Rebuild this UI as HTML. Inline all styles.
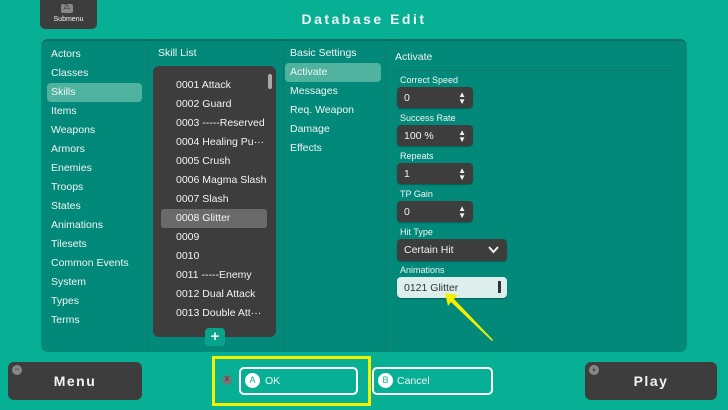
<!DOCTYPE html><html><head><style>
*{margin:0;padding:0;box-sizing:border-box}
body{width:728px;height:410px;background:#07b095;font-family:"Liberation Sans",sans-serif;position:relative;overflow:hidden;color:#f0f5f3}
.a{position:absolute}
.t{font-size:10.5px;white-space:nowrap}
.dark{background:#3d3d3d}
.sp{position:absolute;background:#3d3d3d;border-radius:4px;width:76px;height:21px;box-shadow:0 1px 1px rgba(0,0,0,.3)}
.sp span{position:absolute;left:7px;top:5px;font-size:10.5px}
.sp i{position:absolute;right:7px;top:4px;font-style:normal;font-size:8px;line-height:7px}
.lb{position:absolute;font-size:9px;left:400px}
</style></head><body>
<div class="a dark" style="left:40px;top:-6px;width:57px;height:35px;border-radius:5px"></div>
<div class="a" style="left:61px;top:4px;width:12px;height:9px;background:#888;border-radius:2px;font-size:6px;color:#333;text-align:center;line-height:9px">ZL</div>
<div class="a" style="left:40px;top:16px;width:57px;text-align:center;font-size:7px">Submenu</div>
<div class="a" style="left:0;width:728px;top:11px;text-align:center;font-weight:bold;font-size:14px;letter-spacing:2.5px">Database Edit</div>
<div class="a" style="left:41px;top:39px;width:646px;height:313px;background:#03897a;border-radius:7px;border-top:2px solid #05705f"></div>
<div class="a" style="left:147px;top:45px;width:1px;height:305px;background:#0b7a6b"></div>
<div class="a" style="left:283px;top:45px;width:1px;height:305px;background:#0b7a6b"></div>
<div class="a" style="left:385px;top:45px;width:1px;height:305px;background:#0b7a6b"></div>
<div class="a" style="left:47px;top:83px;width:95px;height:19px;background:#4fb3a0;border-radius:4px"></div>
<div class="a t" style="left:51px;top:45px;line-height:19px">Actors<br>Classes<br>Skills<br>Items<br>Weapons<br>Armors<br>Enemies<br>Troops<br>States<br>Animations<br>Tilesets<br>Common Events<br>System<br>Types<br>Terms</div>
<div class="a t" style="left:158px;top:47px">Skill List</div>
<div class="a dark" style="left:153px;top:66px;width:123px;height:271px;border-radius:6px"></div>
<div class="a" style="left:268px;top:74px;width:4px;height:15px;background:#aaa;border-radius:2px"></div>
<div class="a" style="left:161px;top:209px;width:106px;height:19px;background:#6a6a6a;border-radius:3px"></div>
<div class="a t" style="left:176px;top:76px;line-height:19px">0001 Attack<br>0002 Guard<br>0003 -----Reserved<br>0004 Healing Pu···<br>0005 Crush<br>0006 Magma Slash<br>0007 Slash<br>0008 Glitter<br>0009<br>0010<br>0011 -----Enemy<br>0012 Dual Attack<br>0013 Double Att···</div>
<div class="a" style="left:205px;top:328px;width:20px;height:18px;background:#07a48b;border-radius:4px;text-align:center;font-weight:bold;font-size:15px;line-height:17px">+</div>
<div class="a" style="left:285px;top:63px;width:96px;height:19px;background:#4fb3a0;border-radius:4px"></div>
<div class="a t" style="left:290px;top:44px;line-height:19px">Basic Settings<br>Activate<br>Messages<br>Req. Weapon<br>Damage<br>Effects</div>
<div class="a t" style="left:395px;top:51px">Activate</div>
<div class="a" style="left:395px;top:70px;width:277px;height:1px;background:#1a7365"></div>
<div class="lb" style="top:75px">Correct Speed</div>
<div class="sp" style="left:397px;top:87px"><span>0</span><i>▲<br>▼</i></div>
<div class="lb" style="top:113px">Success Rate</div>
<div class="sp" style="left:397px;top:125px"><span>100 %</span><i>▲<br>▼</i></div>
<div class="lb" style="top:151px">Repeats</div>
<div class="sp" style="left:397px;top:163px"><span>1</span><i>▲<br>▼</i></div>
<div class="lb" style="top:189px">TP Gain</div>
<div class="sp" style="left:397px;top:201px"><span>0</span><i>▲<br>▼</i></div>
<div class="lb" style="top:227px">Hit Type</div>
<div class="sp" style="left:397px;top:239px;width:110px;height:22px"><span>Certain Hit</span>
<svg style="position:absolute;right:8px;top:7px" width="11" height="8"><path d="M1 1 L5.5 6 L10 1" stroke="#f0f0f0" stroke-width="2" fill="none"/></svg></div>
<div class="lb" style="top:265px">Animations</div>
<div class="sp" style="left:397px;top:277px;width:110px;height:21px;background:#dcefec;color:#333"><span>0121 Glitter</span></div>
<div class="a" style="left:498px;top:281px;width:3px;height:12px;background:#333"></div>
<svg class="a" style="left:430px;top:285px" width="70" height="60"><path d="M15 8 L28 10 L24 14 L63 55 L62 56 L21 17 L18 21 Z" fill="#f5f000"/></svg>
<div class="a dark" style="left:8px;top:362px;width:134px;height:38px;border-radius:6px"></div>
<div class="a" style="left:12px;top:365px;width:10px;height:10px;border-radius:50%;background:#888;color:#333;font-size:9px;text-align:center;line-height:9px">−</div>
<div class="a" style="left:8px;top:373px;width:134px;text-align:center;font-weight:bold;font-size:14px;letter-spacing:1.5px">Menu</div>
<div class="a dark" style="left:585px;top:362px;width:132px;height:38px;border-radius:6px"></div>
<div class="a" style="left:589px;top:365px;width:10px;height:10px;border-radius:50%;background:#888;color:#333;font-size:9px;text-align:center;line-height:10px">+</div>
<div class="a" style="left:585px;top:373px;width:132px;text-align:center;font-weight:bold;font-size:14px;letter-spacing:1.5px">Play</div>
<div class="a" style="left:212px;top:356px;width:159px;height:50px;border:3px solid #f5f000"></div>
<div class="a" style="left:222px;top:375px;width:10px;height:10px;border-radius:50%;background:#777;color:#333;font-size:7px;text-align:center;line-height:10px">X</div>
<div class="a" style="left:239px;top:367px;width:119px;height:28px;border:2px solid #fff;border-radius:5px"></div>
<div class="a" style="left:245px;top:373px;width:15px;height:15px;border-radius:50%;background:#fff;color:#07b095;font-size:9px;text-align:center;line-height:15px">A</div>
<div class="a t" style="left:265px;top:375px">OK</div>
<div class="a" style="left:372px;top:367px;width:121px;height:28px;border:2px solid #fff;border-radius:5px"></div>
<div class="a" style="left:378px;top:373px;width:15px;height:15px;border-radius:50%;background:#fff;color:#07b095;font-size:9px;text-align:center;line-height:15px">B</div>
<div class="a t" style="left:397px;top:375px">Cancel</div>
</body></html>
